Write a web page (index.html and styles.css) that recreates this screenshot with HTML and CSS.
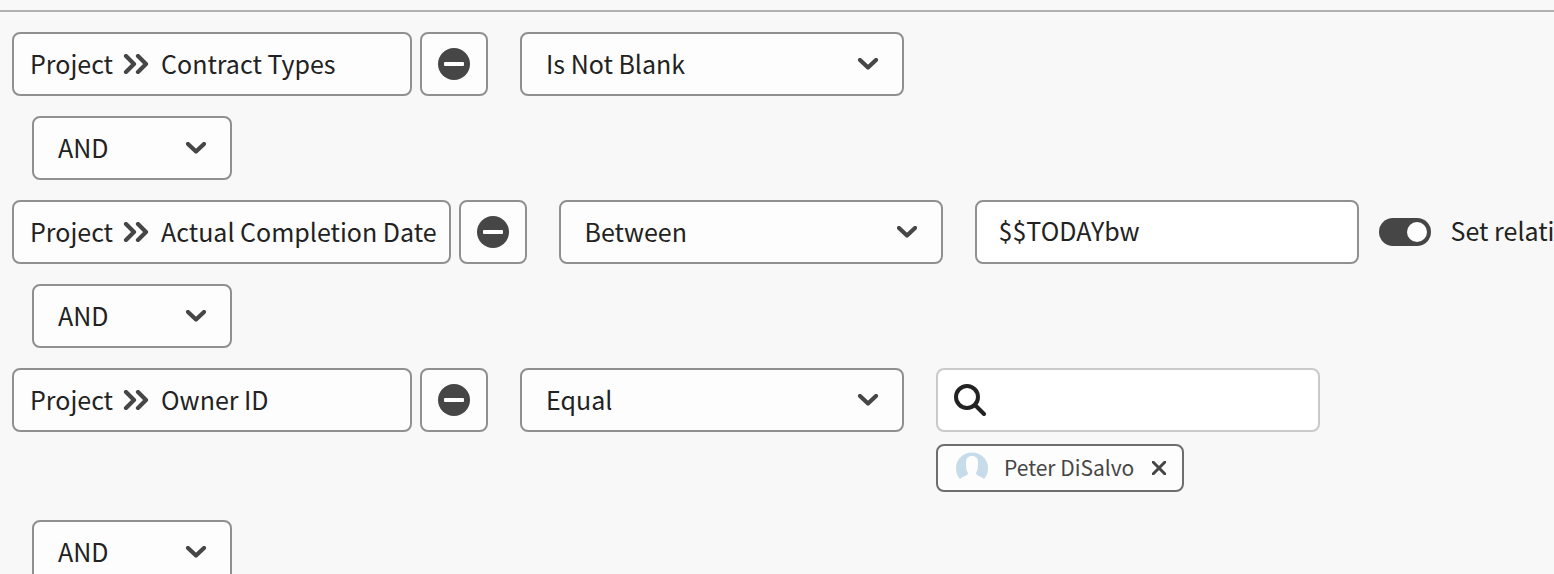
FILE: index.html
```html
<!DOCTYPE html>
<html lang="en">
<head>
  <meta charset="UTF-8">
  <meta name="viewport" content="width=device-width, initial-scale=1.0">
  <title>Filter rules</title>
  <link rel="stylesheet" href="styles.css">
</head>
<body>
  <!-- shared icons -->
  <svg class="icon-defs" aria-hidden="true">
    <symbol id="icon-chevron" viewBox="0 0 20 12">
      <path d="M2 2l8 7.500 8-7.500" fill="none" stroke="#464646" stroke-width="4.200" stroke-linecap="round" stroke-linejoin="round"/>
    </symbol>
    <symbol id="icon-double" viewBox="0 0 26 20">
      <path d="M3 2l8 8-8 8M15 2l8 8-8 8" fill="none" stroke="#464646" stroke-width="4.200" stroke-linecap="round" stroke-linejoin="round"/>
    </symbol>
    <symbol id="icon-minus" viewBox="0 0 32 32">
      <circle cx="16" cy="16" r="16" fill="#464646"/>
      <rect x="6" y="14" width="20" height="4" rx="1" fill="#fff"/>
    </symbol>
  </svg>

  <form class="filters">
    <div class="rule">
      <div class="field">
        <span>Project</span>
        <svg class="double"><use href="#icon-double"/></svg>
        <span>Contract Types</span>
      </div>
      <button type="button" class="remove" aria-label="Remove Contract Types"><svg><use href="#icon-minus"/></svg></button>
      <div class="picker">
        <select aria-label="Contract Types operator">
          <option>Is Not Blank</option>
          <option>Is Blank</option>
        </select>
        <svg class="chevron"><use href="#icon-chevron"/></svg>
      </div>
    </div>

    <div class="picker joiner">
      <select aria-label="Join rules">
        <option>AND</option>
        <option>OR</option>
      </select>
      <svg class="chevron"><use href="#icon-chevron"/></svg>
    </div>

    <div class="rule">
      <div class="field">
        <span>Project</span>
        <svg class="double"><use href="#icon-double"/></svg>
        <span>Actual Completion Date</span>
      </div>
      <button type="button" class="remove" aria-label="Remove Actual Completion Date"><svg><use href="#icon-minus"/></svg></button>
      <div class="picker">
        <select aria-label="Actual Completion Date operator">
          <option>Between</option>
          <option>Equal</option>
        </select>
        <svg class="chevron"><use href="#icon-chevron"/></svg>
      </div>
      <input type="text" class="value" value="$$TODAYbw" aria-label="Date value">
      <label class="toggle">
        <input type="checkbox" role="switch" checked>
        <span>Set relative</span>
      </label>
    </div>

    <div class="picker joiner">
      <select aria-label="Join rules">
        <option>AND</option>
        <option>OR</option>
      </select>
      <svg class="chevron"><use href="#icon-chevron"/></svg>
    </div>

    <div class="rule">
      <div class="field">
        <span>Project</span>
        <svg class="double"><use href="#icon-double"/></svg>
        <span>Owner ID</span>
      </div>
      <button type="button" class="remove" aria-label="Remove Owner ID"><svg><use href="#icon-minus"/></svg></button>
      <div class="picker">
        <select aria-label="Owner ID operator">
          <option>Equal</option>
          <option>Not Equal</option>
        </select>
        <svg class="chevron"><use href="#icon-chevron"/></svg>
      </div>
      <div class="lookup">
        <div class="search">
          <svg viewBox="0 0 32 32">
            <circle cx="13" cy="13" r="11" fill="none" stroke="#222" stroke-width="4"/>
            <path d="M21 21l9 9" stroke="#222" stroke-width="4" stroke-linecap="round"/>
          </svg>
          <input type="search" aria-label="Search owner">
        </div>
        <div class="chip">
          <svg class="avatar" viewBox="0 0 32 32">
            <path d="M4 27A16 16 0 1 1 28 27C25 24 20 24 20 21C22 18 22 15 22 11C22 6 20 4 16 4S10 6 10 11C10 15 10 18 12 21C12 24 7 24 4 27z" fill="#c6dcea"/>
          </svg>
          <span>Peter DiSalvo</span>
          <button type="button" aria-label="Remove Peter DiSalvo">
            <svg viewBox="0 0 14 14"><path d="M1 1l12 12M13 1L1 13" stroke="#464646" stroke-width="3" stroke-linecap="round"/></svg>
          </button>
        </div>
      </div>
    </div>

    <div class="picker joiner">
      <select aria-label="Join rules">
        <option>AND</option>
        <option>OR</option>
      </select>
      <svg class="chevron"><use href="#icon-chevron"/></svg>
    </div>
  </form>
</body>
</html>
```
FILE: styles.css
```css
* {
  box-sizing: border-box;
}
body {
  margin: 0;
  padding-top: 10px;
  background-color: #f8f8f8;
  color: #222;
  font-family: "Noto Sans CJK JP", "Noto Sans", sans-serif;
  font-size: 25px;
  line-height: 36px;
}
svg {
  display: block;
  flex-shrink: 0;
}
.icon-defs {
  position: absolute;
  width: 0;
  height: 0;
}
.filters {
  display: flex;
  flex-direction: column;
  align-items: flex-start;
  gap: 20px;
  padding: 20px 0 20px 12px;
  border-top: 2px solid #b1b1b1;
  overflow: hidden;
}
.rule {
  display: flex;
  align-items: flex-start;
  white-space: nowrap;
}
.field,
.remove,
.picker select,
.value,
.search {
  height: 64px;
  border: 2px solid #909090;
  border-radius: 8px;
  background-color: #fdfdfd;
}
.field {
  display: flex;
  align-items: center;
  min-width: 400px;
  padding: 0 12px 0 16px;
}
.field span {
  padding-bottom: 2px;
}
.double {
  width: 26px;
  height: 20px;
  margin: 0 12px 0 10px;
}
.remove {
  display: flex;
  align-items: center;
  justify-content: center;
  width: 68px;
  margin: 0 32px 0 8px;
  padding: 0;
}
.remove svg {
  width: 32px;
  height: 32px;
}
.picker {
  position: relative;
  width: 384px;
  flex-shrink: 0;
}
.joiner {
  width: 200px;
  margin-left: 20px;
}
.picker select {
  appearance: none;
  display: block;
  width: 100%;
  padding: 0 56px 2px 24px;
  color: inherit;
  font: inherit;
}
.chevron {
  position: absolute;
  top: 26px;
  right: 26px;
  width: 20px;
  height: 12px;
  pointer-events: none;
}
.value {
  width: 384px;
  flex-shrink: 0;
  margin-left: 32px;
  padding: 0 22px 4px;
  background-color: #fff;
  color: inherit;
  font: inherit;
}
.toggle {
  display: flex;
  align-items: center;
  gap: 20px;
  height: 64px;
  margin-left: 20px;
}
.toggle span {
  padding-bottom: 4px;
}
.toggle input {
  appearance: none;
  display: flex;
  justify-content: flex-end;
  flex-shrink: 0;
  width: 52px;
  height: 28px;
  margin: 0;
  padding: 4px;
  border-radius: 14px;
  background-color: #464646;
}
.toggle input::before {
  content: "";
  width: 20px;
  height: 20px;
  border-radius: 50%;
  background-color: #fff;
}
.toggle input:not(:checked) {
  justify-content: flex-start;
}
.lookup {
  width: 384px;
  flex-shrink: 0;
  margin: 0 0 8px 32px;
}
.search {
  display: flex;
  align-items: center;
  gap: 12px;
  padding: 0 16px;
  border-color: #cacaca;
  background-color: #fff;
}
.search svg {
  width: 32px;
  height: 32px;
}
.search input {
  flex: 1;
  min-width: 0;
  border: 0;
  outline: 0;
  background: none;
  font: inherit;
}
.chip {
  display: inline-flex;
  align-items: center;
  height: 48px;
  margin-top: 12px;
  padding: 0 16px 0 18px;
  border: 2px solid #6e6e6e;
  border-radius: 8px;
  background-color: #fdfdfd;
  color: #464646;
  font-size: 21px;
  vertical-align: top;
}
.chip span {
  padding-bottom: 2px;
}
.avatar {
  width: 32px;
  height: 32px;
  margin-right: 16px;
}
.chip button {
  margin-left: 18px;
  padding: 0;
  border: 0;
  background: none;
}
.chip button svg {
  width: 14px;
  height: 14px;
}
```
